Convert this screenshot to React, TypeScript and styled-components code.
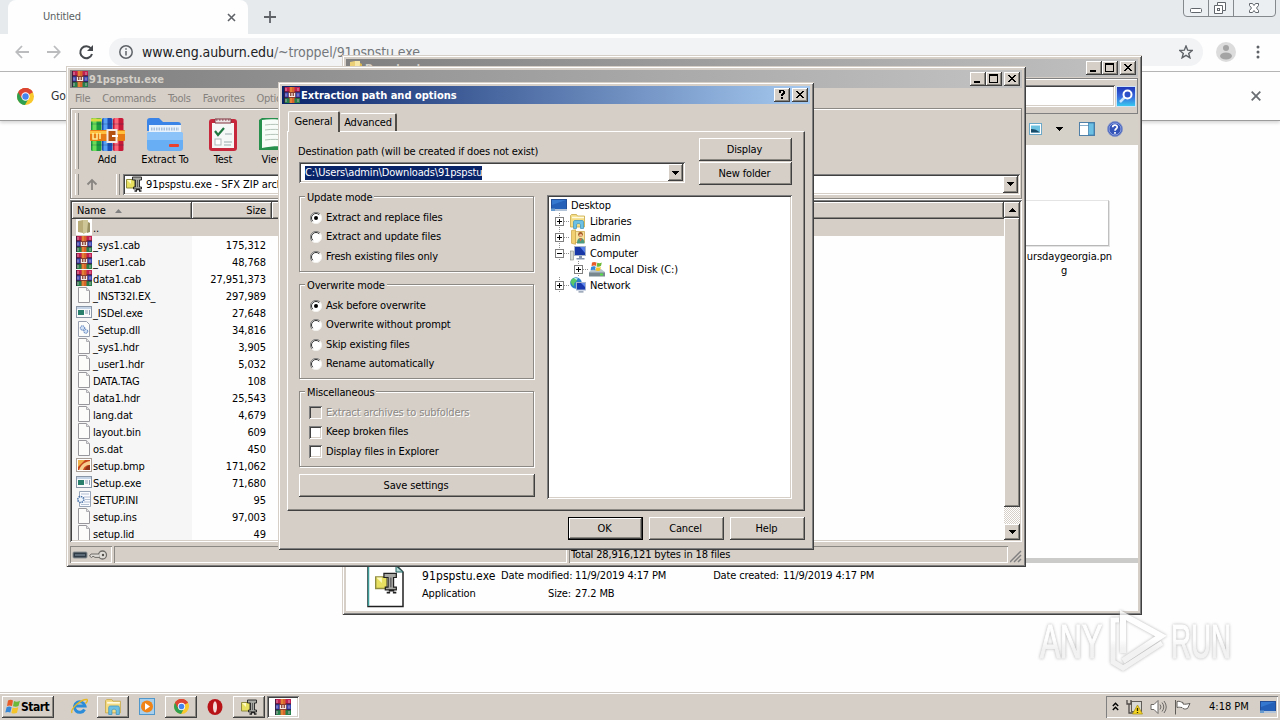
import React from 'react'
import styled, { createGlobalStyle, css } from 'styled-components'

type FileKind = 'folder' | 'rar' | 'blank' | 'exe' | 'dll' | 'bmp' | 'ini'

const files: { name: string; size: string; kind: FileKind }[] = [
  { name: '..', size: '', kind: 'folder' },
  { name: '_sys1.cab', size: '175,312', kind: 'rar' },
  { name: '_user1.cab', size: '48,768', kind: 'rar' },
  { name: 'data1.cab', size: '27,951,373', kind: 'rar' },
  { name: '_INST32I.EX_', size: '297,989', kind: 'blank' },
  { name: '_ISDel.exe', size: '27,648', kind: 'exe' },
  { name: '_Setup.dll', size: '34,816', kind: 'dll' },
  { name: '_sys1.hdr', size: '3,905', kind: 'blank' },
  { name: '_user1.hdr', size: '5,032', kind: 'blank' },
  { name: 'DATA.TAG', size: '108', kind: 'blank' },
  { name: 'data1.hdr', size: '25,543', kind: 'blank' },
  { name: 'lang.dat', size: '4,679', kind: 'blank' },
  { name: 'layout.bin', size: '609', kind: 'blank' },
  { name: 'os.dat', size: '450', kind: 'blank' },
  { name: 'setup.bmp', size: '171,062', kind: 'bmp' },
  { name: 'Setup.exe', size: '71,680', kind: 'exe' },
  { name: 'SETUP.INI', size: '95', kind: 'ini' },
  { name: 'setup.ins', size: '97,003', kind: 'blank' },
  { name: 'setup.lid', size: '49', kind: 'blank' },
]

const updateModes = [
  'Extract and replace files',
  'Extract and update files',
  'Fresh existing files only',
]

const overwriteModes = [
  'Ask before overwrite',
  'Overwrite without prompt',
  'Skip existing files',
  'Rename automatically',
]

/* icons */

const RarIcon = ({ size = 16 }: { size?: number }) => (
  <svg width={size} height={size} viewBox="0 0 16 16">
    <rect width="16" height="5" fill="#c02050" />
    <rect y="5" width="16" height="6" fill="#3848b4" />
    <rect y="11" width="16" height="5" fill="#25804a" />
    <path d="M0 5h16M0 10.700h16" stroke="#301838" strokeWidth="1.100" />
    <path d="M.5 0v16" stroke="#301838" strokeWidth=".8" />
    <path d="M2 1v3M2 6.500v3M2 12v3M14 1v3M14 6.500v3M14 12v3" stroke="#e4b8d0" strokeWidth=".8" />
    <rect x="5.500" y="0" width="5" height="16" fill="#d8642c" />
    <path d="M7 0v16" stroke="#f0a040" strokeWidth="1" />
    <rect x="4.500" y="5" width="7" height="6" fill="#8c4030" />
    <path d="M5.500 6v3.500h5V6M8 6v3.500" stroke="#f4ece4" strokeWidth="1.200" fill="none" />
  </svg>
)

const BlankIcon = () => (
  <svg width="16" height="16" viewBox="0 0 16 16">
    <path d="M2.500.5h8l3 3v12h-11z" fill="#fcfcfa" stroke="#98989c" />
    <path d="M10.500.5v3h3" fill="#e4e4e4" stroke="#b0b0b4" />
  </svg>
)

const ExeIcon = () => (
  <svg width="16" height="16" viewBox="0 0 16 16">
    <rect x=".5" y="2.500" width="15" height="11" fill="#f8fafc" stroke="#8896a8" />
    <rect x="1" y="3" width="14" height="2" fill="#c4d4e6" />
    <rect x="2" y="6" width="6" height="5" fill="#28806c" />
    <path d="M9 7h3M9 9h3M13.500 6v5" stroke="#8898b0" />
  </svg>
)

const DllIcon = () => (
  <svg width="16" height="16" viewBox="0 0 16 16">
    <path d="M2.500.5h8l3 3v12h-11z" fill="#fcfcfa" stroke="#98a0b0" />
    <circle cx="6.500" cy="7" r="2.200" fill="#d0e0f4" stroke="#3f68b0" strokeDasharray="1.200 .7" />
    <circle cx="9.800" cy="10.300" r="2" fill="#d0e0f4" stroke="#3f68b0" strokeDasharray="1.200 .7" />
  </svg>
)

const BmpIcon = () => (
  <svg width="16" height="16" viewBox="0 0 16 16">
    <rect x=".5" y="1.500" width="15" height="13" fill="#fff" stroke="#a8a098" />
    <rect x="2" y="3" width="12" height="10" fill="#c8461c" />
    <path d="M2 3h7L2 10z" fill="#f0b048" />
    <path d="M3 13c2-5 5-8 11-9v4c-4 0-6 2-7 5z" fill="#f6cf90" />
    <path d="M9 13c1-3 2-4 5-5v5z" fill="#8e3418" />
  </svg>
)

const IniIcon = () => (
  <svg width="16" height="16" viewBox="0 0 16 16">
    <path d="M3.500.5h11v15h-11z" fill="#fafcff" stroke="#98a4b8" />
    <path d="M5 3h8M8 6h6M9 8.500h5M8 11h6M5 13.500h8" stroke="#b4c0d4" />
    <circle cx="4.800" cy="8.500" r="3" fill="#eef4fc" stroke="#4c74a8" strokeWidth="1.600" strokeDasharray="1.500 .8" />
  </svg>
)

const FolderIcon = ({ faded = false }: { faded?: boolean }) => (
  <svg width="16" height="16" viewBox="0 0 16 16">
    {faded && <rect width="16" height="16" fill="#fff" />}
    <path d="M2 2l5-1v13l-5-1z" fill={faded ? '#b8ac78' : '#ecd078'} />
    <path d="M7 1h5v12l-5 2z" fill={faded ? '#cfc698' : '#f8e8a8'} />
    <path d="M12 3l2 1v9l-3 1z" fill={faded ? '#989060' : '#dcb850'} />
  </svg>
)

const LibrariesIcon = ({ size = 16 }: { size?: number }) => (
  <svg width={size} height={size} viewBox="0 0 16 16">
    <path d="M.5 2.500l1-1h5l1 1.500h7v11H.5z" fill="#f4dc84" stroke="#c8a848" strokeWidth=".8" />
    <path d="M2 4.500h12" stroke="#fffbe0" strokeWidth="1.500" />
    <path d="M3.500 15.500V9c0-1 .6-1.500 1.500-1.500h7c1 0 1.500.6 1.500 1.500v6.500h-3V12c0-2-4-2-4 0v3.500z" fill="#6cc0e4" stroke="#3a90bc" strokeWidth=".7" />
  </svg>
)

const UserFolderIcon = () => (
  <svg width="16" height="16" viewBox="0 0 16 16">
    <path d="M1.500 1.500l4-.8v14.600l-4-1z" fill="#f0d070" stroke="#c8a040" strokeWidth=".7" />
    <path d="M5.500 2.500h9v11h-9z" fill="#f8e49c" stroke="#c8a040" strokeWidth=".7" />
    <circle cx="10.500" cy="5.500" r="2.400" fill="#a05828" />
    <circle cx="10.700" cy="6.200" r="1.500" fill="#f0b890" />
    <path d="M7 14.500c0-4 1.500-5.500 3.500-5.500s4 1.500 4 5.500z" fill="#4c9a80" />
    <path d="M9 9.500l1.600 3 1.600-3z" fill="#e8683c" />
  </svg>
)

const DesktopIcon = ({ size = 16 }: { size?: number }) => (
  <svg width={size} height={size} viewBox="0 0 16 16">
    <rect x="0" y="2" width="16" height="12" fill="#244e96" />
    <rect x="1" y="3" width="14" height="9" fill="#3478d0" />
    <path d="M1 12V8l14-5v9z" fill="#2460b8" />
    <rect x="0" y="12" width="16" height="2" fill="#b4c4d8" />
    <rect x="0" y="11.500" width="4" height="2.500" fill="#6a9cd0" />
  </svg>
)

const ComputerIcon = () => (
  <svg width="16" height="16" viewBox="0 0 16 16">
    <rect x=".5" y="6" width="3" height="9" fill="#d8dcd4" stroke="#889088" strokeWidth=".6" />
    <rect x="4.500" y="1.500" width="11" height="9" fill="#1838a8" stroke="#a8b4c8" />
    <path d="M10 2h5v6z" fill="#5880e8" />
    <path d="M9 11h3v2h2.500v1.500h-8V13H9z" fill="#8898b0" />
  </svg>
)

const DiskIcon = () => (
  <svg width="16" height="16" viewBox="0 0 16 16">
    <path d="M0 11l4-3h8l4 3v4H0z" fill="#b8c4cc" />
    <rect x="0" y="11.500" width="16" height="4" fill="#78868e" />
    <rect x="11" y="12.500" width="3" height="2" fill="#58e048" />
    <path d="M3 1.500c2-1 3-.6 4.500 0L7 5c-1.500-.6-3-.6-4.500.2z" fill="#e85c28" />
    <path d="M8.300 1.800c1.500.6 3 .6 4.500-.3L12 5c-1.500 1-3 1-4.500.4z" fill="#6cb838" />
    <path d="M2.200 6c1.600-.9 3-.8 4.500-.2L6 9.200c-1.400-.5-2.800-.5-4.500.3z" fill="#3888d8" />
    <path d="M7.400 6.200c1.500.6 3 .6 4.500-.3L11 9.400c-1.400.8-2.800.8-4.400.2z" fill="#f4c428" />
  </svg>
)

const NetworkIcon = () => (
  <svg width="16" height="16" viewBox="0 0 16 16">
    <circle cx="6" cy="6" r="5.800" fill="#2c80c8" />
    <path d="M2 2c3-2 5-1 5 1S4 5 4 8 1 6 .5 5z" fill="#58c868" />
    <path d="M4 1.200C6 .6 7 1 8 1.500L6.500 3z" fill="#c0ecf4" />
    <rect x="6.500" y="5.500" width="9" height="7.500" fill="#1838b0" stroke="#a4b4d0" />
    <path d="M11 6h4v4z" fill="#6088ec" />
    <path d="M8.500 15.500h5v-1.200h-5z" fill="#7888a0" />
  </svg>
)

const ZipExeIcon = ({ size = 16 }: { size?: number }) => (
  <svg width={size} height={size} viewBox="0 0 16 16">
    <path d="M.5 3.500h8v8.500h-8z" fill="#e8e060" stroke="#908c40" />
    <path d="M1 4h4v4z" fill="#fcfac0" />
    <path d="M6.500 1h9v3h-2v7h2v2H7.500v-2h2V4h-3z" fill="#a8a8a4" stroke="#202020" strokeWidth=".9" />
    <path d="M11.500 4v7" stroke="#606060" />
    <path d="M10 13.500h4M8.500 15h2.500M13 15h2.500" stroke="#202020" strokeWidth="1.300" />
  </svg>
)

const ChromeIcon = ({ size = 16 }: { size?: number }) => (
  <svg width={size} height={size} viewBox="0 0 16 16">
    <circle cx="8" cy="8" r="8" fill="#f8c82c" />
    <path d="M8 8L1.100 4A8 8 0 0 1 14.900 4z" fill="#dc4434" />
    <path d="M1.100 4A8 8 0 0 0 7.500 16l3.500-6.300L8 8z" fill="#2ea050" />
    <path d="M8 4h6.900A8 8 0 0 0 1.100 4l3.400 6z" fill="#dc4434" />
    <circle cx="8" cy="8" r="3.900" fill="#fff" />
    <circle cx="8" cy="8" r="3" fill="#4484ee" />
  </svg>
)

const AddIcon = () => (
  <svg width="36" height="36" viewBox="0 0 36 36">
    <rect x="2" y="1" width="10.500" height="33" rx="1.500" fill="#1c9c40" />
    <rect x="3.500" y="1" width="4" height="33" fill="#6cdc58" />
    <rect x="13" y="1" width="10.500" height="33" rx="1.500" fill="#1c50b8" />
    <rect x="14.500" y="1" width="4" height="33" fill="#58a0f4" />
    <rect x="24" y="1" width="10.500" height="33" rx="1.500" fill="#c81838" />
    <rect x="25.500" y="1" width="4" height="33" fill="#fc6478" />
    <path d="M2 3h11" stroke="#d8d840" strokeWidth="3" />
    <path d="M2 7h11M13 7h11M24 7h11M2 28h11M13 28h11M24 28h11" stroke="#0c3048" strokeOpacity=".3" strokeWidth="1.200" />
    <rect x="1" y="13" width="35" height="11" rx="1" fill="#e87c14" />
    <path d="M1 15.500h35" stroke="#ffc040" strokeWidth="3" />
    <path d="M4 16v6h4v-6M11 16v6" stroke="#fff0a0" strokeWidth="1.500" fill="none" />
    <rect x="18.500" y="13" width="9" height="12" fill="#b45010" stroke="#f4ece4" strokeWidth="2" />
    <path d="M23 19h6" stroke="#fff" strokeWidth="2" />
  </svg>
)

const ExtractIcon = () => (
  <svg width="38" height="36" viewBox="0 0 38 36">
    <path d="M1 4c0-2 1-3 3-3h9l4 4h15c2 0 3 1 3 3v6H1z" fill="#3a84e8" />
    <rect x="3" y="8" width="32" height="10" fill="#e8f2fc" />
    <path d="M5 12h28" stroke="#a8c0dc" strokeWidth="3" strokeDasharray="1.500 1" />
    <path d="M1 17c0-1 1-2 2-2h32c1 0 2 1 2 2v14c0 2-1 3-3 3H4c-2 0-3-1-3-3z" fill="#68aef4" />
    <path d="M1 17c0-1 1-2 2-2h32c1 0 2 1 2 2v6H1z" fill="#8cc4fa" />
    <rect x="23" y="27" width="10" height="3" rx="1" fill="#e8402c" />
  </svg>
)

const TestIcon = () => (
  <svg width="30" height="36" viewBox="0 0 30 36">
    <rect x="1" y="2" width="28" height="32" rx="3" fill="#c8283c" />
    <path d="M4 6h22v25H4z" fill="#f6f8f8" />
    <path d="M7 2h16v4H7z" fill="#ece4e4" stroke="#80303c" />
    <path d="M8 3h14" stroke="#80303c" strokeDasharray="1.500 1.500" />
    <path d="M7 14l3 4 6-7" stroke="#207840" strokeWidth="2.200" fill="none" />
    <path d="M17 17h7M16 25h8M16 28h7" stroke="#b8c4c4" strokeWidth="1.300" />
    <rect x="7" y="22" width="6" height="6" fill="#fff" stroke="#b0b8b8" />
  </svg>
)

const ViewIcon = () => (
  <svg width="30" height="36" viewBox="0 0 30 36">
    <path d="M1 3l3-2h26v32H1z" fill="#26904c" />
    <path d="M4 3c7-1 15-1 26 1v26c-8-1-16-1-26 1z" fill="#f8fcf8" />
    <path d="M7 8c7-1 14-1 23 1M7 13c7-1 14-1 23 1M7 18c7-1 14-1 23 1M7 23c7-1 14-1 23 1" stroke="#b4c4b8" fill="none" />
  </svg>
)

const fileIcons: Record<FileKind, React.ReactNode> = {
  folder: <FolderIcon faded />,
  rar: <RarIcon />,
  blank: <BlankIcon />,
  exe: <ExeIcon />,
  dll: <DllIcon />,
  bmp: <BmpIcon />,
  ini: <IniIcon />,
}

const CaptionGlyph = ({ type }: { type: 'min' | 'max' | 'close' | 'help' }) => (
  <svg width="12" height="11" viewBox="0 0 12 11" shapeRendering="crispEdges">
    {type === 'min' && <path d="M2 8h6v2H2z" />}
    {type === 'max' && <path d="M1 1h9v9H1zM2 3v6h7V3z" fillRule="evenodd" />}
    {type === 'close' && (
      <path d="M2 2h2v1h1v1h2V3h1V2h2v1H9v1H8v1H7v1h1v1h1v1h1v1H8V8H7V7H5v1H4v1H2V8h1V7h1V6h1V5H4V4H3V3H2z" />
    )}
    {type === 'help' && (
      <path d="M3 1h5v1h1v3H8v1H7v1H5V5h1V4h1V2H5v2H3V2zM5 8h2v2H5z" />
    )}
  </svg>
)

const DownArrow = () => (
  <svg width="7" height="4" viewBox="0 0 7 4" shapeRendering="crispEdges">
    <path d="M0 0h7v1H6v1H5v1H4v1H3V3H2V2H1V1H0z" />
  </svg>
)

const UpArrow = () => (
  <svg width="7" height="4" viewBox="0 0 7 4" shapeRendering="crispEdges">
    <path d="M0 4h7V3H6V2H5V1H4V0H3v1H2v1H1v1H0z" />
  </svg>
)

const TreeRow = ({
  label,
  icon,
  level = 0,
  sign,
}: {
  label: string
  icon: React.ReactNode
  level?: number
  sign?: '+' | '-'
}) => (
  <TreeItem $level={level}>
    {sign && (
      <svg width="15" height="16" viewBox="0 0 15 16" shapeRendering="crispEdges">
        <path d="M4.500 0v16M9 8.500h6" stroke="#909090" strokeDasharray="1 1" />
        <rect x=".5" y="4.500" width="8" height="8" fill="#fff" stroke="#808080" />
        <path d="M2 8.500h5" stroke="#000" />
        {sign === '+' && <path d="M4.500 6v5" stroke="#000" />}
      </svg>
    )}
    {icon}
    <span>{label}</span>
  </TreeItem>
)

const RadioGroup = ({ title, items }: { title: string; items: string[] }) => (
  <Group>
    <Legend>{title}</Legend>
    {items.map((item, index) => (
      <Option key={item}>
        <Radio>
          <circle cx="6" cy="6" r="5.500" fill="#fff" />
          <path d="M2 10A5.500 5.500 0 0 1 10 2" stroke="#808080" fill="none" />
          <path d="M2.800 9.200A4.500 4.500 0 0 1 9.200 2.800" stroke="#303030" fill="none" />
          <path d="M2 10A5.500 5.500 0 0 0 10 2" stroke="#f4f2ee" fill="none" />
          {index === 0 && <circle cx="6" cy="6" r="2" fill="#000" />}
        </Radio>
        {item}
      </Option>
    ))}
  </Group>
)

const Browser = () => (
  <BrowserWindow>
    <TabStrip>
      <BrowserTab>
        <span>Untitled</span>
        <svg width="9" height="9" viewBox="0 0 9 9">
          <path d="M1 1l7 7M8 1L1 8" stroke="#5f6368" strokeWidth="1.600" />
        </svg>
      </BrowserTab>
      <NewTab width="12" height="12" viewBox="0 0 12 12">
        <path d="M6 0v12M0 6h12" stroke="#5f6368" strokeWidth="1.800" />
      </NewTab>
      <WindowControls width="93" height="17" viewBox="0 0 93 17">
        <path d="M.5 0v13q0 3.500 3.500 3.500h85q3.500 0 3.500-3.500V0" fill="#eceff1" stroke="#84898e" />
        <path d="M25.500 0v16M50.500 0v16" stroke="#84898e" />
        <rect x="7.500" y="8.500" width="11" height="4" rx="1" fill="#fff" stroke="#60666c" />
        <path d="M34.500 2.500h8v8h-3v3h-8v-8h3z" fill="#fff" stroke="#60666c" />
        <path d="M34.500 5.500h5v5" fill="none" stroke="#60666c" />
        <rect x="34.500" y="8.500" width="2" height="2" fill="#fff" stroke="#60666c" />
        <path d="M66.500 3.500h3l1.500 2 1.500-2h3v2L73.500 8l2 2.500v2h-3l-1.500-2-1.500 2h-3v-2L68.500 8l-2-2.500z" fill="#fff" stroke="#60666c" />
      </WindowControls>
    </TabStrip>
    <AddressBar>
      <svg width="80" height="18" viewBox="0 0 80 18" fill="none" strokeWidth="1.800">
        <path d="M15 9H2.500M8 3L2.300 9 8 15" stroke="#babcbe" />
        <path d="M33 9h12.500M40 3l5.700 6-5.700 6" stroke="#babcbe" />
        <path d="M77 5.500A6 6 0 1 0 78 11" stroke="#45484c" strokeWidth="2" />
        <path d="M79 2v6h-6z" fill="#45484c" />
      </svg>
      <Omnibox>
        <svg width="14" height="14" viewBox="0 0 14 14" fill="none" stroke="#5f6368">
          <circle cx="7" cy="7" r="6.200" strokeWidth="1.500" />
          <path d="M7 6v4.500M7 3.200v1.500" strokeWidth="1.500" />
        </svg>
        <Url>
          www.eng.auburn.edu<i>/~troppel/91pspstu.exe</i>
        </Url>
        <svg width="14" height="14" viewBox="0 0 14 14">
          <path d="M7 1l1.700 4.200 4.500.3-3.500 2.900 1.200 4.400L7 10.400l-3.900 2.400 1.200-4.400L.8 5.500l4.500-.3z" fill="none" stroke="#5f6368" strokeWidth="1.400" />
        </svg>
      </Omnibox>
      <svg width="20" height="20" viewBox="0 0 20 20">
        <circle cx="10" cy="10" r="10" fill="#dcdcdc" />
        <circle cx="10" cy="6" r="3" fill="#a4a4a4" />
        <ellipse cx="10" cy="14" rx="6" ry="3.500" fill="#a4a4a4" />
      </svg>
      <svg width="4" height="14" viewBox="0 0 4 14" fill="#5f6368">
        <circle cx="2" cy="2" r="1.500" />
        <circle cx="2" cy="7" r="1.500" />
        <circle cx="2" cy="12" r="1.500" />
      </svg>
    </AddressBar>
    <InfoBar>
      <ChromeIcon size={17} />
      <span>Go</span>
      <svg width="10" height="10" viewBox="0 0 10 10">
        <path d="M.7.7l8.600 8.600M9.300.7L.7 9.300" stroke="#6a6e72" strokeWidth="1.800" />
      </svg>
    </InfoBar>
  </BrowserWindow>
)

const Explorer = () => (
  <ExplorerWindow>
    <TitleBar>
      <FolderIcon />
      <TitleText>Downloads</TitleText>
      <Captions types={['min', 'max', 'close']} />
    </TitleBar>
    <ExplorerAddress>
      <ExplorerInput />
      <SearchButton>
        <svg width="18" height="18" viewBox="0 0 18 18">
          <path d="M9 9l-6 6" stroke="#c8e4fc" strokeWidth="2.500" />
          <circle cx="10.500" cy="7.500" r="4" fill="#2c50c8" stroke="#fff" strokeWidth="2" />
        </svg>
      </SearchButton>
    </ExplorerAddress>
    <ExplorerToolbar>
      <svg width="13" height="12" viewBox="0 0 13 12">
        <rect x=".5" y=".5" width="12" height="11" fill="#fff" stroke="#6ca8c8" />
        <rect x="2" y="2.500" width="9" height="7" fill="#6cc0e0" />
        <path d="M2 9.500V6c4 0 6 1 9 3.500z" fill="#184c68" />
      </svg>
      <DownArrow />
      <svg width="16" height="14" viewBox="0 0 16 14">
        <rect x=".5" y=".5" width="15" height="13" fill="#fff" stroke="#5080a8" />
        <path d="M1 3.500h9" stroke="#88b0cc" />
        <rect x="9.500" y="1" width="5.500" height="12" fill="#6cc0e4" stroke="#3878a8" strokeWidth=".7" />
      </svg>
      <svg width="16" height="16" viewBox="0 0 16 16">
        <circle cx="8" cy="8" r="7.500" fill="#3454b8" stroke="#8898c8" />
        <circle cx="8" cy="8" r="6" fill="none" stroke="#a8b8ec" strokeWidth=".8" />
        <path d="M5.700 6.200C5.800 3.400 10.300 3.600 10.200 6.200 10.100 7.800 8 7.800 8 9.800M8 11v1.800" stroke="#fff" strokeWidth="1.700" fill="none" />
      </svg>
    </ExplorerToolbar>
    <ExplorerContent>
      <Thumbnail />
      <ThumbnailName>
        <span>ursdaygeorgia.pn</span>
        <span>g</span>
      </ThumbnailName>
    </ExplorerContent>
    <DetailsPane>
      <svg width="38" height="42" viewBox="0 0 38 42">
        <path d="M1 0v40.500h35V6l-6-6" fill="#fff" stroke="#202020" strokeWidth="1.500" />
        <path d="M1.500 0v40" stroke="#3c9c98" strokeWidth="1.500" />
        <path d="M29 0v6h7z" fill="#b8dcd8" stroke="#206060" />
        <svg x="8" y="6" width="22" height="24">
          <ZipExeIcon size={22} />
        </svg>
      </svg>
      <Details>
        <DetailName>91pspstu.exe</DetailName>
        <DetailLabel>Date modified:</DetailLabel>
        <span>11/9/2019 4:17 PM</span>
        <DetailLabel>Date created:</DetailLabel>
        <span>11/9/2019 4:17 PM</span>
        <span>Application</span>
        <DetailLabel>Size:</DetailLabel>
        <span>27.2 MB</span>
      </Details>
    </DetailsPane>
  </ExplorerWindow>
)

const Captions = ({ types }: { types: ('min' | 'max' | 'close' | 'help')[] }) => (
  <CaptionButtons>
    {types.map((type) => (
      <CaptionButton key={type} $gap={type === 'close'}>
        <CaptionGlyph type={type} />
      </CaptionButton>
    ))}
  </CaptionButtons>
)

const Archiver = () => (
  <ArchiverWindow>
    <TitleBar>
      <RarIcon />
      <TitleText>91pspstu.exe</TitleText>
      <Captions types={['min', 'max', 'close']} />
    </TitleBar>
    <MenuBar>
      <span>File</span>
      <span>Commands</span>
      <span>Tools</span>
      <span>Favorites</span>
      <span>Options</span>
    </MenuBar>
    <Rebar>
      <Toolbar>
        <Grip />
        <Tool $width={56}>
          <AddIcon />
          Add
        </Tool>
        <Tool $width={60}>
          <ExtractIcon />
          Extract To
        </Tool>
        <Tool $width={56}>
          <TestIcon />
          Test
        </Tool>
        <Tool $width={44}>
          <ViewIcon />
          View
        </Tool>
      </Toolbar>
      <PathBar>
        <Grip />
        <svg width="37" height="14" viewBox="0 0 37 14">
          <path d="M13 13V3M8.500 7.500L13 3l4.500 4.500" stroke="#888480" strokeWidth="1.800" fill="none" />
        </svg>
        <Grip />
        <PathCombo>
          <ZipExeIcon />
          <span>91pspstu.exe - SFX ZIP archive</span>
          <DropButton>
            <DownArrow />
          </DropButton>
        </PathCombo>
      </PathBar>
    </Rebar>
    <ListView>
      <List>
        <ListHeader>
          <HeaderCell $width={120}>
            Name
            <svg width="7" height="4" viewBox="0 0 7 4">
              <path d="M0 4l3.500-4L7 4z" fill="#808080" />
            </svg>
          </HeaderCell>
          <HeaderCell $width={80} $right>
            Size
          </HeaderCell>
          <HeaderCell $grow />
        </ListHeader>
        {files.map(({ name, size, kind }) => (
          <FileRow key={name} $focused={kind === 'folder'}>
            <FileName>
              {fileIcons[kind]}
              <span>{name}</span>
            </FileName>
            <FileSize>{size}</FileSize>
          </FileRow>
        ))}
      </List>
      <ScrollBar>
        <ScrollButton>
          <UpArrow />
        </ScrollButton>
        <ScrollThumb />
        <ScrollButton>
          <DownArrow />
        </ScrollButton>
      </ScrollBar>
    </ListView>
    <StatusBar>
      <StatusCell $width={42}>
        <svg width="36" height="12" viewBox="0 0 36 12">
          <rect x="1" y="3" width="14" height="6" rx="1" fill="#303c48" stroke="#8c9094" />
          <path d="M3 6h10" stroke="#8898a8" />
          <circle cx="30.500" cy="6" r="4" fill="#e0ddd8" stroke="#706c68" strokeWidth="1.300" />
          <path d="M27 5h-8l-1.500 2 2 1.500 1.500-1.300 2 1.200h4" fill="#dcd8d4" stroke="#706c68" />
          <circle cx="31" cy="6" r="1.200" fill="#504c48" />
        </svg>
      </StatusCell>
      <StatusCell $width={453} />
      <StatusCell $grow>Total 28,916,121 bytes in 18 files</StatusCell>
      <svg width="12" height="13" viewBox="0 0 12 13">
        <path d="M0 12L11 1M4 12l7-7M8 12l3-3" stroke="#808080" strokeWidth="1.500" />
      </svg>
    </StatusBar>
  </ArchiverWindow>
)

const ExtractDialog = () => (
  <DialogWindow>
    <TitleBar $active>
      <RarIcon />
      <TitleText $active>Extraction path and options</TitleText>
      <Captions types={['help', 'close']} />
    </TitleBar>
    <TabRow>
      <DialogTab $active>General</DialogTab>
      <DialogTab>Advanced</DialogTab>
    </TabRow>
    <TabPanel>
      <PathArea>
        <div>
          <PathLabel>Destination path (will be created if does not exist)</PathLabel>
          <PathInput>
            <Selected>C:\Users\admin\Downloads\91pspstu</Selected>
            <DropButton>
              <DownArrow />
            </DropButton>
          </PathInput>
        </div>
        <PathButtons>
          <Button>Display</Button>
          <Button>New folder</Button>
        </PathButtons>
      </PathArea>
      <OptionsArea>
        <GroupColumn>
          <RadioGroup title="Update mode" items={updateModes} />
          <RadioGroup title="Overwrite mode" items={overwriteModes} />
          <Group>
            <Legend>Miscellaneous</Legend>
            <Option $disabled>
              <CheckBox $disabled />
              Extract archives to subfolders
            </Option>
            <Option>
              <CheckBox />
              Keep broken files
            </Option>
            <Option>
              <CheckBox />
              Display files in Explorer
            </Option>
          </Group>
          <SaveButton>Save settings</SaveButton>
        </GroupColumn>
        <Tree>
          <TreeRow label="Desktop" icon={<DesktopIcon />} />
          <TreeRow label="Libraries" icon={<LibrariesIcon />} level={1} sign="+" />
          <TreeRow label="admin" icon={<UserFolderIcon />} level={1} sign="+" />
          <TreeRow label="Computer" icon={<ComputerIcon />} level={1} sign="-" />
          <TreeRow label="Local Disk (C:)" icon={<DiskIcon />} level={2} sign="+" />
          <TreeRow label="Network" icon={<NetworkIcon />} level={1} sign="+" />
        </Tree>
      </OptionsArea>
    </TabPanel>
    <DialogButtons>
      <Button $default>OK</Button>
      <Button>Cancel</Button>
      <Button>Help</Button>
    </DialogButtons>
  </DialogWindow>
)

const Watermark = () => (
  <WatermarkLogo width="220" height="70" viewBox="0 0 220 70">
    <defs>
      <linearGradient id="fade" gradientUnits="userSpaceOnUse" x1="0" y1="0" x2="0" y2="60">
        <stop offset=".5" stopColor="#fff" />
        <stop offset=".65" stopColor="#f0f0f0" />
      </linearGradient>
    </defs>
    <g fill="url(#fade)" stroke="url(#fade)" strokeWidth="1.200" fontFamily="'Liberation Sans Narrow', 'Liberation Sans', sans-serif" fontSize="49">
      <text x="5" y="49" textLength="62" lengthAdjust="spacingAndGlyphs">
        ANY
      </text>
      <text x="136" y="49" textLength="60" lengthAdjust="spacingAndGlyphs">
        RUN
      </text>
    </g>
    <path d="M88 44V6l38 21-38 25" fill="none" stroke="url(#fade)" strokeWidth="6" />
    <path d="M84 11h-6v42l10 6 39-25" fill="none" stroke="url(#fade)" strokeWidth="5" />
  </WatermarkLogo>
)

const Taskbar = () => (
  <TaskbarRoot>
    <StartButton>
      <svg width="17" height="16" viewBox="0 0 17 16">
        <path d="M4 1.500c2-1 3.500-.8 5 0L8 7c-1.500-.8-3.300-.8-5 0z" fill="#e85c28" />
        <path d="M10 2c2 1 4 .8 6-.3L14.500 7c-1.800 1-3.500 1-5.500.3z" fill="#6cb838" />
        <path d="M2.600 8.200c1.800-.9 3.500-.8 5 0L6.300 13.500c-1.500-.8-3.300-.8-5 0z" fill="#3888d8" />
        <path d="M8.600 8.500c2 .9 3.800.8 5.700-.2L13 13.700c-1.900 1-3.600 1-5.600.2z" fill="#f4c428" />
      </svg>
      Start
    </StartButton>
    <TaskItems>
      <TaskItem>
        <svg width="17" height="17" viewBox="0 0 17 17">
          <path d="M13.500 11.500A5.300 5.300 0 1 1 14 8H5" stroke="#2c8cd8" strokeWidth="3" fill="none" />
          <path d="M1 15C-1 11 10 1 16 1.500c1 1-.5 3-1.500 4" stroke="#e8b820" strokeWidth="1.300" fill="none" />
        </svg>
      </TaskItem>
      <TaskItem $state="raised">
        <LibrariesIcon size={17} />
      </TaskItem>
      <TaskItem>
        <svg width="16" height="17" viewBox="0 0 16 17">
          <rect x=".5" y=".5" width="15" height="16" fill="#a8d0ec" stroke="#5098cc" />
          <circle cx="8" cy="8.500" r="6" fill="#f08418" />
          <path d="M6 5v7l5-3.500z" fill="#fff" />
        </svg>
      </TaskItem>
      <TaskItem $state="raised">
        <ChromeIcon size={15} />
      </TaskItem>
      <TaskItem>
        <svg width="16" height="16" viewBox="0 0 16 16">
          <ellipse cx="8" cy="8" rx="7.500" ry="8" fill="#b81418" />
          <ellipse cx="8" cy="8" rx="2" ry="5.800" fill="#f4dcd8" />
        </svg>
      </TaskItem>
      <TaskItem $state="raised">
        <ZipExeIcon size={16} />
      </TaskItem>
      <TaskItem $state="pressed">
        <RarIcon />
      </TaskItem>
    </TaskItems>
    <Tray>
      <svg width="7" height="9" viewBox="0 0 7 9">
        <path d="M.8 4l2.700-2.700L6.200 4M.8 8l2.700-2.700L6.200 8" stroke="#000" strokeWidth="1.400" fill="none" />
      </svg>
      <svg width="17" height="16" viewBox="0 0 17 16">
        <rect x="5.500" y="2.500" width="10" height="10" fill="#d8d8d4" stroke="#605c58" />
        <path d="M1 1v4h4V1M3 5v9h4" stroke="#504c48" strokeWidth="1.300" fill="none" />
        <path d="M11.500 6l5 9h-10z" fill="#f4d420" stroke="#a88c10" strokeWidth=".7" />
        <path d="M11.500 9v3M11.500 13v1" stroke="#302800" strokeWidth="1.300" />
      </svg>
      <svg width="17" height="16" viewBox="0 0 17 16" fill="none" stroke="#6c6864">
        <path d="M1 5.500h3l4-4v13l-4-4H1z" fill="#fff" />
        <path d="M10 5.500q2 2.500 0 5M12 3.500q3.500 4.500 0 9M14 2q4.500 6 0 12" />
      </svg>
      <svg width="17" height="16" viewBox="0 0 17 16">
        <path d="M1.500 1v14.500M3 2.500c3-1 4 1 6 1v1.500c2 .5 4 0 7-.5l-2.500 5C11 10.500 9 10 8 8.500c-2 0-3-.7-5 0z" fill="#fff" stroke="#605c58" />
      </svg>
      <Clock>4:18 PM</Clock>
      <DesktopIcon size={16} />
    </Tray>
  </TaskbarRoot>
)

export default function App() {
  return (
    <Screen>
      <GlobalStyle />
      <Browser />
      <Explorer />
      <Archiver />
      <ExtractDialog />
      <Watermark />
      <Taskbar />
    </Screen>
  )
}

const face = '#d5cfc8'

const GlobalStyle = createGlobalStyle`
  body {
    margin: 0;
    overflow: hidden;
  }
  *, *::before, *::after {
    box-sizing: border-box;
  }
  svg {
    flex: none;
    display: block;
  }
`

const raised = css`
  background: ${face};
  box-shadow: inset -1px -1px #404040, inset 1px 1px #fff, inset -2px -2px #8a8680;
`

const sunken = css`
  box-shadow: inset 1px 1px #808080, inset -1px -1px #fff, inset 2px 2px #404040,
    inset -2px -2px ${face};
`

const Screen = styled.div`
  position: relative;
  display: flex;
  flex-direction: column;
  width: 1280px;
  height: 720px;
  overflow: hidden;
  background: #fefefe;
  color: #000;
  font-family: 'DejaVu Sans Condensed', 'DejaVu Sans', sans-serif;
  font-stretch: condensed;
  font-size: 11px;
  letter-spacing: -0.15px;
  line-height: 14px;
  white-space: nowrap;
`

const BrowserWindow = styled.div`
  display: flex;
  flex-direction: column;
  flex: 1;
`

const TabStrip = styled.div`
  display: flex;
  align-items: flex-start;
  height: 34px;
  padding-left: 8px;
  background: #e6eaed;
`

const BrowserTab = styled.div`
  display: flex;
  align-items: center;
  justify-content: space-between;
  width: 240px;
  height: 34px;
  padding: 0 12px 0 35px;
  border-radius: 8px 8px 0 0;
  background: #fefefe;
  color: #5a5e62;
`

const NewTab = styled.svg`
  margin: 11px 0 0 16px;
`

const WindowControls = styled.svg`
  margin: 0 4px 0 auto;
`

const AddressBar = styled.div`
  display: flex;
  align-items: center;
  height: 38px;
  padding: 0 20px 2px 14px;
  border-bottom: 1px solid #b4b4b4;
  svg + div {
    margin-left: 15px;
  }
  > svg:nth-last-child(2) {
    margin-left: 13px;
  }
  > svg:last-child {
    margin-left: auto;
  }
`

const Omnibox = styled.div`
  display: flex;
  align-items: center;
  width: 1094px;
  height: 28px;
  padding: 0 10px;
  border-radius: 14px;
  background: #f1f3f4;
`

const Url = styled.span`
  flex: 1;
  margin-left: 9px;
  font-size: 14px;
  letter-spacing: -0.1px;
  color: #202124;
  i {
    font-style: normal;
    color: #74787c;
  }
`

const InfoBar = styled.div`
  display: flex;
  align-items: center;
  height: 49px;
  padding: 0 19px 0 17px;
  border-bottom: 1px solid #9c9c9c;
  box-shadow: 0 2px 3px #d8d8d8;
  font-size: 12px;
  color: #303438;
  span {
    flex: 1;
    margin-left: 17px;
  }
`

const Window = styled.div`
  position: absolute;
  display: flex;
  flex-direction: column;
  padding: 4px;
  background: ${face};
  box-shadow: inset 1px 1px ${face}, inset -1px -1px #404040, inset 2px 2px #fff,
    inset -2px -2px #808080;
`

const ExplorerWindow = styled(Window)`
  left: 342px;
  top: 55px;
  width: 800px;
  height: 560px;
`

const ArchiverWindow = styled(Window)`
  left: 66px;
  top: 66px;
  width: 960px;
  height: 501px;
`

const DialogWindow = styled(Window)`
  left: 278px;
  top: 82px;
  width: 536px;
  height: 468px;
`

const TitleBar = styled.div<{ $active?: boolean }>`
  display: flex;
  align-items: center;
  flex: none;
  height: 18px;
  padding: 0 2px;
  background: ${({ $active }) =>
    $active
      ? 'linear-gradient(90deg, #0a246a, #a6caf0)'
      : 'linear-gradient(90deg, #808080, #c2c2c2)'};
`

const TitleText = styled.span<{ $active?: boolean }>`
  flex: 1;
  margin: 1px 0 0 1px;
  font-weight: 700;
  letter-spacing: 0;
  color: ${({ $active }) => ($active ? '#fff' : '#d4d0c8')};
`

const CaptionButtons = styled.div`
  display: flex;
`

const CaptionButton = styled.div<{ $gap: boolean }>`
  ${raised}
  display: flex;
  justify-content: center;
  width: 16px;
  height: 14px;
  padding-top: 1px;
  margin-left: ${({ $gap }) => ($gap ? 2 : 0)}px;
`

const ExplorerAddress = styled.div`
  display: flex;
  align-items: center;
  flex: none;
  height: 36px;
  padding: 0 1px 0 8px;
  margin: 1px 0 0 1px;
  border: 1px solid #808080;
  box-shadow: inset 1px 1px #fff, 0 1px #fff;
`

const ExplorerInput = styled.div`
  ${sunken}
  flex: 1;
  height: 22px;
  background: #fff;
`

const SearchButton = styled.div`
  display: flex;
  align-items: center;
  justify-content: center;
  width: 20px;
  height: 21px;
  margin-left: 1px;
  border: 1px solid #d0e4f8;
  background: linear-gradient(#2038b8, #3868dc 50%, #38c8f0);
`

const ExplorerToolbar = styled.div`
  display: flex;
  align-items: center;
  justify-content: flex-end;
  flex: none;
  height: 31px;
  padding: 0 15px 1px 0;
  background: #d5d1c8;
  svg:nth-child(2) {
    margin: 0 16px 0 14px;
  }
  svg:nth-child(4) {
    margin-left: 12px;
  }
`

const ExplorerContent = styled.div`
  display: flex;
  flex-direction: column;
  align-items: flex-end;
  height: 413px;
  padding: 55px 25px 0 0;
  background: #fefefe;
`

const Thumbnail = styled.div`
  width: 96px;
  height: 46px;
  margin-right: 4px;
  border: 1px solid #e4e4e4;
  border-right-color: #c0c0c0;
  border-bottom-color: #b8b8b8;
  background: #fff;
  box-shadow: 1px 1px #e4e4e4;
`

const ThumbnailName = styled.div`
  display: flex;
  flex-direction: column;
  align-items: center;
  width: 98px;
  margin-top: 4px;
  line-height: 13.5px;
  span:first-child {
    align-self: flex-end;
    margin-right: 1px;
    letter-spacing: -0.1px;
  }
`

const DetailsPane = styled.div`
  display: flex;
  flex: 1;
  padding: 3px 0 0 21px;
  border-top: 5px solid #cbcbc9;
  background: #fefefe;
`

const Details = styled.div`
  display: grid;
  grid-template-columns: 75px 70px 132px 68px auto;
  column-gap: 4px;
  grid-auto-rows: 18px;
  margin: 3px 0 0 17px;
`

const DetailName = styled.span`
  font-size: 12px;
  letter-spacing: 0.1px;
`

const DetailLabel = styled.span`
  text-align: right;
`

const MenuBar = styled.div`
  display: flex;
  align-items: center;
  flex: none;
  gap: 12px;
  height: 20px;
  padding: 1px 0 0 5px;
  color: #85817c;
  letter-spacing: -0.3px;
`

const Rebar = styled.div`
  display: flex;
  flex-direction: column;
  flex: none;
  height: 91px;
  border: 1px solid #8c8884;
  box-shadow: inset 1px 1px #fff, 0 1px #fff;
`

const Toolbar = styled.div`
  display: flex;
  height: 63px;
  padding: 4px 4px 3px;
`

const Grip = styled.div`
  width: 4px;
  border-left: 1px solid #fff;
  border-right: 1px solid #8c8884;
`

const Tool = styled.div<{ $width: number }>`
  display: flex;
  flex-direction: column;
  align-items: center;
  width: ${({ $width }) => $width}px;
  height: 50px;
  padding-top: 4px;
`

const PathBar = styled.div`
  display: flex;
  align-items: center;
  height: 24px;
  padding: 0 1px 0 4px;
  ${Grip} {
    height: 21px;
  }
`

const PathCombo = styled.div`
  ${sunken}
  display: flex;
  align-items: center;
  flex: 1;
  height: 21px;
  margin-left: 3px;
  padding: 2px 2px 2px 3px;
  background: #fff;
  span {
    flex: 1;
    margin: 1px 0 0 4px;
    letter-spacing: -0.05px;
  }
`

const DropButton = styled.div`
  ${raised}
  display: flex;
  align-items: center;
  justify-content: center;
  width: 15px;
  height: 17px;
`

const ListView = styled.div`
  ${sunken}
  display: flex;
  flex: none;
  height: 342px;
  margin-top: 1px;
  padding: 2px;
  background: #fefefe;
`

const List = styled.div`
  flex: 1;
  overflow: hidden;
`

const ListHeader = styled.div`
  display: flex;
  height: 17px;
`

const HeaderCell = styled.div<{ $width?: number; $right?: boolean; $grow?: boolean }>`
  ${raised}
  display: flex;
  align-items: center;
  gap: 9px;
  justify-content: ${({ $right }) => ($right ? 'flex-end' : 'flex-start')};
  width: ${({ $width }) => ($width ? `${$width}px` : 'auto')};
  flex: ${({ $grow }) => ($grow ? 1 : 'none')};
  padding: 1px 6px 0 5px;
`

const FileName = styled.div`
  display: flex;
  align-items: flex-start;
  width: 120px;
  padding-left: 4px;
  background: #f6f6f6;
  span {
    margin: 3px 0 0 1px;
  }
`

const FileSize = styled.div`
  width: 74px;
  padding-top: 3px;
  text-align: right;
  letter-spacing: -0.1px;
`

const FileRow = styled.div<{ $focused: boolean }>`
  display: flex;
  height: 17px;
  background: ${({ $focused }) => ($focused ? face : 'transparent')};
  ${FileName} {
    ${({ $focused }) => $focused && `background: ${face};`}
  }
`

const ScrollBar = styled.div`
  display: flex;
  flex-direction: column;
  width: 16px;
  background: repeating-conic-gradient(#fff 0 25%, ${face} 0 50%) 0 0 / 2px 2px;
`

const ScrollButton = styled.div`
  ${raised}
  display: flex;
  align-items: center;
  justify-content: center;
  height: 16px;
  &:last-child {
    margin-top: auto;
  }
`

const ScrollThumb = styled.div`
  ${raised}
  height: 289px;
`

const StatusBar = styled.div`
  display: flex;
  align-items: flex-end;
  flex: 1;
  gap: 2px;
  padding-top: 3px;
`

const StatusCell = styled.div<{ $width?: number; $grow?: boolean }>`
  display: flex;
  align-items: center;
  height: 17px;
  width: ${({ $width }) => ($width ? `${$width}px` : 'auto')};
  flex: ${({ $grow }) => ($grow ? 1 : 'none')};
  padding-left: 2px;
  box-shadow: inset 1px 1px #8c8884, inset -1px -1px #fff;
`

const TabRow = styled.div`
  display: flex;
  align-items: flex-end;
  flex: none;
  height: 27px;
  padding-left: 6px;
`

const DialogTab = styled.div<{ $active?: boolean }>`
  position: relative;
  display: flex;
  align-items: center;
  justify-content: center;
  width: ${({ $active }) => ($active ? 52 : 57)}px;
  height: ${({ $active }) => ($active ? 21 : 18)}px;
  margin-bottom: ${({ $active }) => ($active ? -1 : 0)}px;
  border: 1px solid #fff;
  border-bottom: 0;
  border-right: 2px solid #504c48;
  border-left-color: ${({ $active }) => ($active ? '#fff' : face)};
  border-radius: 2px 2px 0 0;
  background: ${face};
`

const TabPanel = styled.div`
  height: 380px;
  margin: 0 5px 0 5px;
  padding: 5px 12px 0 11px;
  border: 1px solid #fff;
  border-right-color: #404040;
  border-bottom-color: #404040;
  box-shadow: inset -1px -1px #8c8884;
`

const PathArea = styled.div`
  display: flex;
  justify-content: space-between;
  height: 58px;
`

const PathLabel = styled.div`
  margin: 8px 0 3px -1px;
`

const PathInput = styled.div`
  ${sunken}
  display: flex;
  align-items: center;
  justify-content: space-between;
  width: 386px;
  height: 21px;
  padding: 2px 2px 2px 6px;
  background: #fff;
`

const Selected = styled.span`
  height: 14px;
  line-height: 14px;
  background: #0a246a;
  color: #fff;
`

const PathButtons = styled.div`
  display: flex;
  flex-direction: column;
  gap: 1px;
  margin-top: 1px;
`

const Button = styled.div<{ $default?: boolean }>`
  ${raised}
  display: flex;
  align-items: center;
  justify-content: center;
  width: 93px;
  height: 23px;
  padding-right: 2px;
  ${({ $default }) =>
    $default &&
    css`
      border: 1px solid #000;
    `}
`

const OptionsArea = styled.div`
  display: flex;
  justify-content: space-between;
`

const GroupColumn = styled.div`
  display: flex;
  flex-direction: column;
  width: 236px;
  margin-top: 1px;
`

const Group = styled.div`
  width: 235px;
  height: 76px;
  padding-left: 7px;
  margin-bottom: 12px;
  border: 1px solid #8c8884;
  box-shadow: 1px 1px #fff, inset 1px 1px #fff;
  &:nth-child(2) {
    height: 95px;
  }
  &:nth-child(3) {
    margin-bottom: 7px;
  }
`

const Legend = styled.div`
  width: fit-content;
  margin: -6px 0 3px -2px;
  padding: 0 2px;
  background: ${face};
`

const Option = styled.div<{ $disabled?: boolean }>`
  display: flex;
  align-items: center;
  height: 19.5px;
  padding-left: 3px;
  color: ${({ $disabled }) => ($disabled ? '#8c8884' : '#000')};
  text-shadow: ${({ $disabled }) => ($disabled ? '1px 1px #fff' : 'none')};
`

const Radio = styled.svg.attrs({ width: 12, height: 12, viewBox: '0 0 12 12' })`
  margin-right: 4px;
`

const CheckBox = styled.div<{ $disabled?: boolean }>`
  ${sunken}
  width: 13px;
  height: 13px;
  margin: 0 4px 0 -1px;
  background: ${({ $disabled }) => ($disabled ? face : '#fff')};
`

const SaveButton = styled(Button)`
  width: 236px;
`

const Tree = styled.div`
  ${sunken}
  width: 245px;
  height: 304px;
  padding: 2px 2px 2px 4px;
  background: #fff;
`

const TreeItem = styled.div<{ $level: number }>`
  display: flex;
  align-items: center;
  height: 16px;
  padding-left: ${({ $level }) => ($level ? $level * 19 - 15 : 0)}px;
  span {
    margin: 1px 0 0 4px;
  }
`

const DialogButtons = styled.div`
  display: flex;
  justify-content: flex-end;
  gap: 6px;
  margin: 6px 5px 0 0;
  ${Button} {
    width: 75px;
    height: 23px;
  }
`

const WatermarkLogo = styled.svg`
  position: absolute;
  left: 1035px;
  top: 609px;
  filter: drop-shadow(0 0 1.5px #a0a0a0);
  opacity: 0.8;
`

const TaskbarRoot = styled.div`
  position: relative;
  display: flex;
  align-items: center;
  flex: none;
  height: 27px;
  padding: 0 2px;
  background: ${face};
  box-shadow: 0 -1px #cfcbc4, inset 0 1px #fff;
`

const StartButton = styled.div`
  ${raised}
  display: flex;
  align-items: center;
  width: 52px;
  height: 22px;
  padding-left: 2px;
  font-size: 12px;
  font-weight: 700;
  letter-spacing: -0.5px;
`

const TaskItems = styled.div`
  display: flex;
  flex: 1;
  gap: 2px;
  margin-left: 9px;
`

const TaskItem = styled.div<{ $state?: 'raised' | 'pressed' }>`
  display: flex;
  align-items: center;
  justify-content: center;
  width: 32px;
  height: 22px;
  ${({ $state }) => $state === 'raised' && raised}
  ${({ $state }) =>
    $state === 'pressed' &&
    css`
      ${sunken}
      background: #fff;
    `}
`

const Tray = styled.div`
  display: flex;
  align-items: center;
  gap: 7px;
  width: 172px;
  height: 22px;
  padding: 0 2px 0 6px;
  box-shadow: inset 1px 1px #808080, inset -1px -1px #fff;
`

const Clock = styled.span`
  margin: 0 auto 0 11px;
  letter-spacing: 0;
`
